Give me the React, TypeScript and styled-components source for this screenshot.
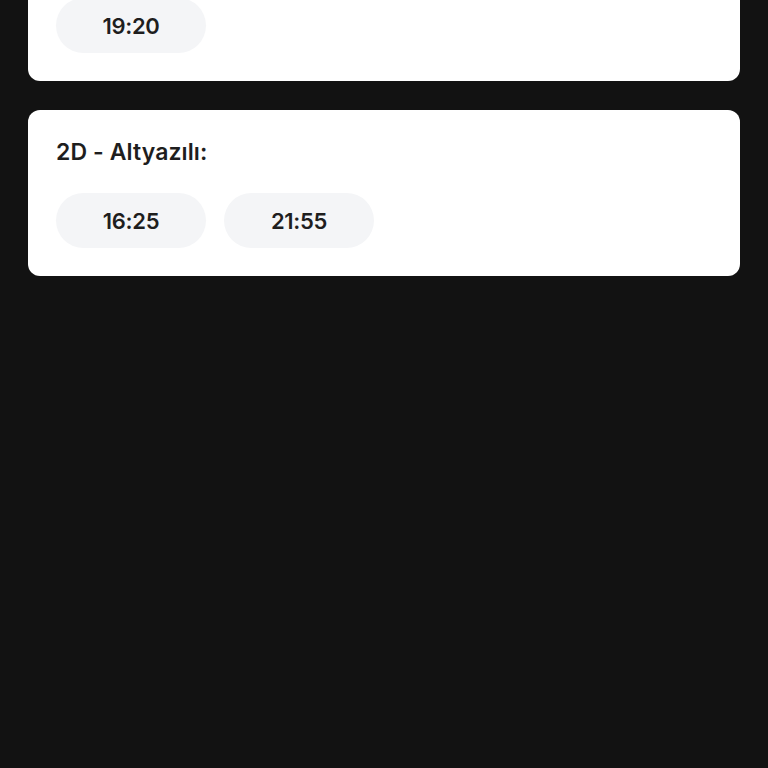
import React from 'react';
import styled, { createGlobalStyle } from 'styled-components';

const GlobalStyle = createGlobalStyle`
  html, body {
    margin: 0;
    padding: 0;
    background: #121212;
    height: 100%;
    overflow: hidden;
  }
  body {
    font-family: Inter, "Liberation Sans", sans-serif;
  }
`;

const Page = styled.main`
  min-height: 768px;
  background: #121212;
  padding: 0 28px;
  box-sizing: border-box;
`;

const List = styled.div`
  display: flex;
  flex-direction: column;
  gap: 29px;
  margin-top: -85px;
`;

const Card = styled.section`
  background: #ffffff;
  border-radius: 12px;
  padding: 28px;
  display: flex;
  flex-direction: column;
  gap: 27px;
`;

const Title = styled.h3`
  margin: 0;
  font-size: 23px;
  line-height: 28px;
  font-weight: 600;
  color: #1e1e1e;
  letter-spacing: 0.1px;
`;

const Times = styled.div`
  display: flex;
  gap: 18px;
`;

const TimePill = styled.button`
  width: 150px;
  height: 55px;
  border: none;
  border-radius: 28px;
  background: #f4f5f7;
  color: #1e1e1e;
  font-family: inherit;
  font-size: 22px;
  font-weight: 600;
  letter-spacing: -0.3px;
  cursor: pointer;
`;

const sessions = [
  { label: '2D - Türkçe Dublaj:', times: ['19:20'] },
  { label: '2D - Altyazılı:', times: ['16:25', '21:55'] },
];

const App: React.FC = () => (
  <>
    <GlobalStyle />
    <Page>
      <List>
        {sessions.map((s) => (
          <Card key={s.label}>
            <Title>{s.label}</Title>
            <Times>
              {s.times.map((t) => (
                <TimePill key={t}>{t}</TimePill>
              ))}
            </Times>
          </Card>
        ))}
      </List>
    </Page>
  </>
);

export default App;
